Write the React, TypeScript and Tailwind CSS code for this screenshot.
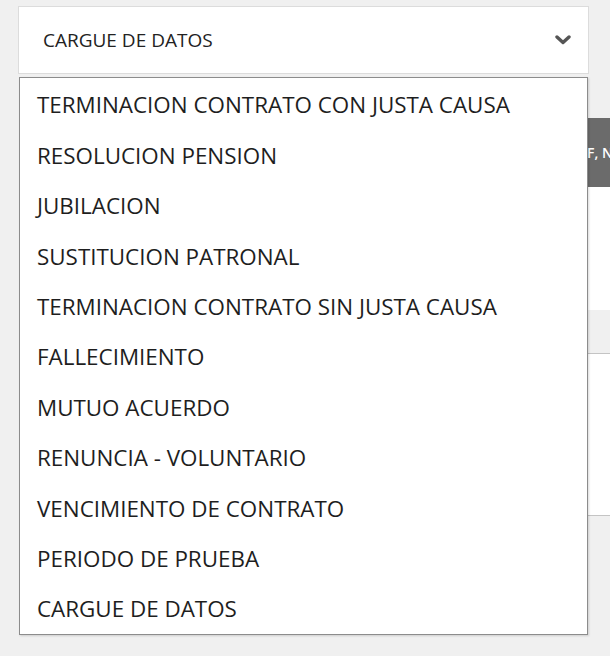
const opciones = [
  'TERMINACION CONTRATO CON JUSTA CAUSA',
  'RESOLUCION PENSION',
  'JUBILACION',
  'SUSTITUCION PATRONAL',
  'TERMINACION CONTRATO SIN JUSTA CAUSA',
  'FALLECIMIENTO',
  'MUTUO ACUERDO',
  'RENUNCIA - VOLUNTARIO',
  'VENCIMIENTO DE CONTRATO',
  'PERIODO DE PRUEBA',
  'CARGUE DE DATOS',
]

export default function App() {
  return (
    <div
      className="relative w-[610px] h-[656px] overflow-hidden bg-[#f0f0f0] text-[#222]"
      style={{ fontFamily: '"Open Sans", "Noto Sans", sans-serif' }}
    >
      <div className="pt-[6px] pl-[18px] w-[589px]">
        {/* Select */}
        <div className="h-[68px] bg-white border border-[#dcdcdc] flex items-center justify-between pl-[24px] pr-[17px]">
          <span className="text-[19px]">CARGUE DE DATOS</span>
          <svg width="16" height="10" viewBox="0 0 16 10" className="text-[#555]">
            <polyline
              points="2,2 8,7.5 14,2"
              fill="none"
              stroke="currentColor"
              strokeWidth="3.4"
              strokeLinecap="round"
              strokeLinejoin="round"
            />
          </svg>
        </div>
      </div>

      {/* Contenido detrás del desplegable */}
      <div className="ml-[19px] mt-[44px] w-[700px]">
        <div className="h-[69px] bg-[#6b6b6b] flex items-center pl-[568px] text-white text-[14px] font-semibold">
          F, N
        </div>
        <div className="h-[123px] bg-white" />
        <div className="h-[43px]" />
        <div className="h-[163px] bg-white border border-[#c4c4c4]" />
      </div>

      {/* Lista desplegada */}
      <ul className="absolute left-[19px] top-[77px] w-[569px] bg-white border border-[#8c8c8c] pt-[2px] shadow-[1px_1px_2px_rgba(0,0,0,0.15)]">
        {opciones.map((op) => (
          <li key={op} className="h-[50.4px] flex items-center pl-[17px] text-[22.4px] text-[#1e1e1e]">
            {op}
          </li>
        ))}
      </ul>
    </div>
  )
}
